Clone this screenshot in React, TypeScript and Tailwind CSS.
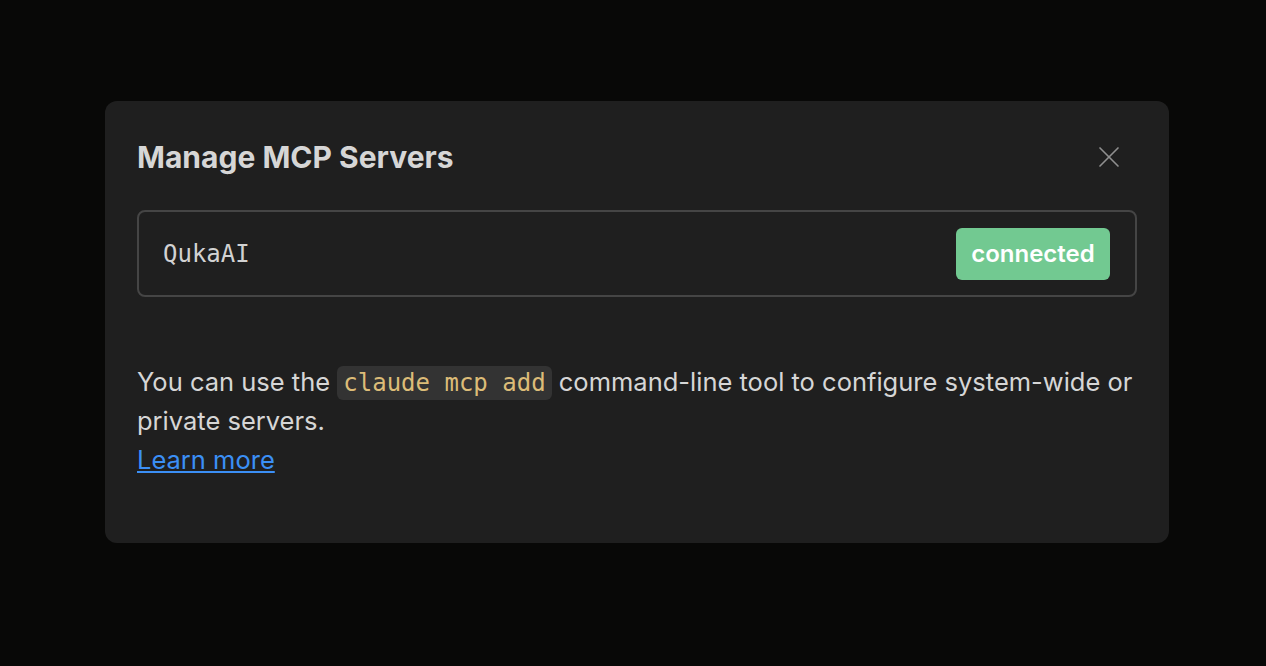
import { X } from "lucide-react";

export default function App() {
	return (
		<div
			className="min-h-screen w-full bg-[#080807] pt-[101px] pl-[105px]"
			style={{ fontFamily: "Inter, 'Noto Sans', sans-serif" }}
		>
			{/* Dialog */}
			<div className="w-[1064px] h-[442px] rounded-xl bg-[#1f1f1f] px-8 pt-[34px]">
				{/* Header */}
				<div className="flex items-center justify-between">
					<h1 className="text-[30px] leading-[44px] font-bold text-[#d6d6d6]">
						Manage MCP Servers
					</h1>
					<button className="mr-[10px] text-[#8f8f8f]">
						<X size={36} strokeWidth={1.1} />
					</button>
				</div>

				{/* Server row */}
				<div className="mt-[31px] h-[87px] rounded-lg border-2 border-[#454545] flex items-center justify-between pl-6 pr-[25px]">
					<span
						className="text-[24px] text-[#d2d2d2]"
						style={{ fontFamily: "'DejaVu Sans Mono', monospace" }}
					>
						QukaAI
					</span>
					<span className="h-[52px] w-[154px] rounded-md bg-[#72c991] flex items-center justify-center text-[24px] font-semibold text-white">
						connected
					</span>
				</div>

				{/* Help text */}
				<p className="mt-[65px] text-[25.5px] leading-[39px] text-[#d6d6d6]">
					You can use the{" "}
					<code
						className="rounded-md bg-[#333333] px-[6px] py-[3px] text-[24px] leading-none text-[#dcbc78]"
						style={{ fontFamily: "'DejaVu Sans Mono', monospace" }}
					>
						claude mcp add
					</code>{" "}
					command-line tool to configure system-wide or private servers.
					<br />
					<a href="#" className="text-[#3b8ff5] underline underline-offset-2">
						Learn more
					</a>
				</p>
			</div>
		</div>
	);
}
